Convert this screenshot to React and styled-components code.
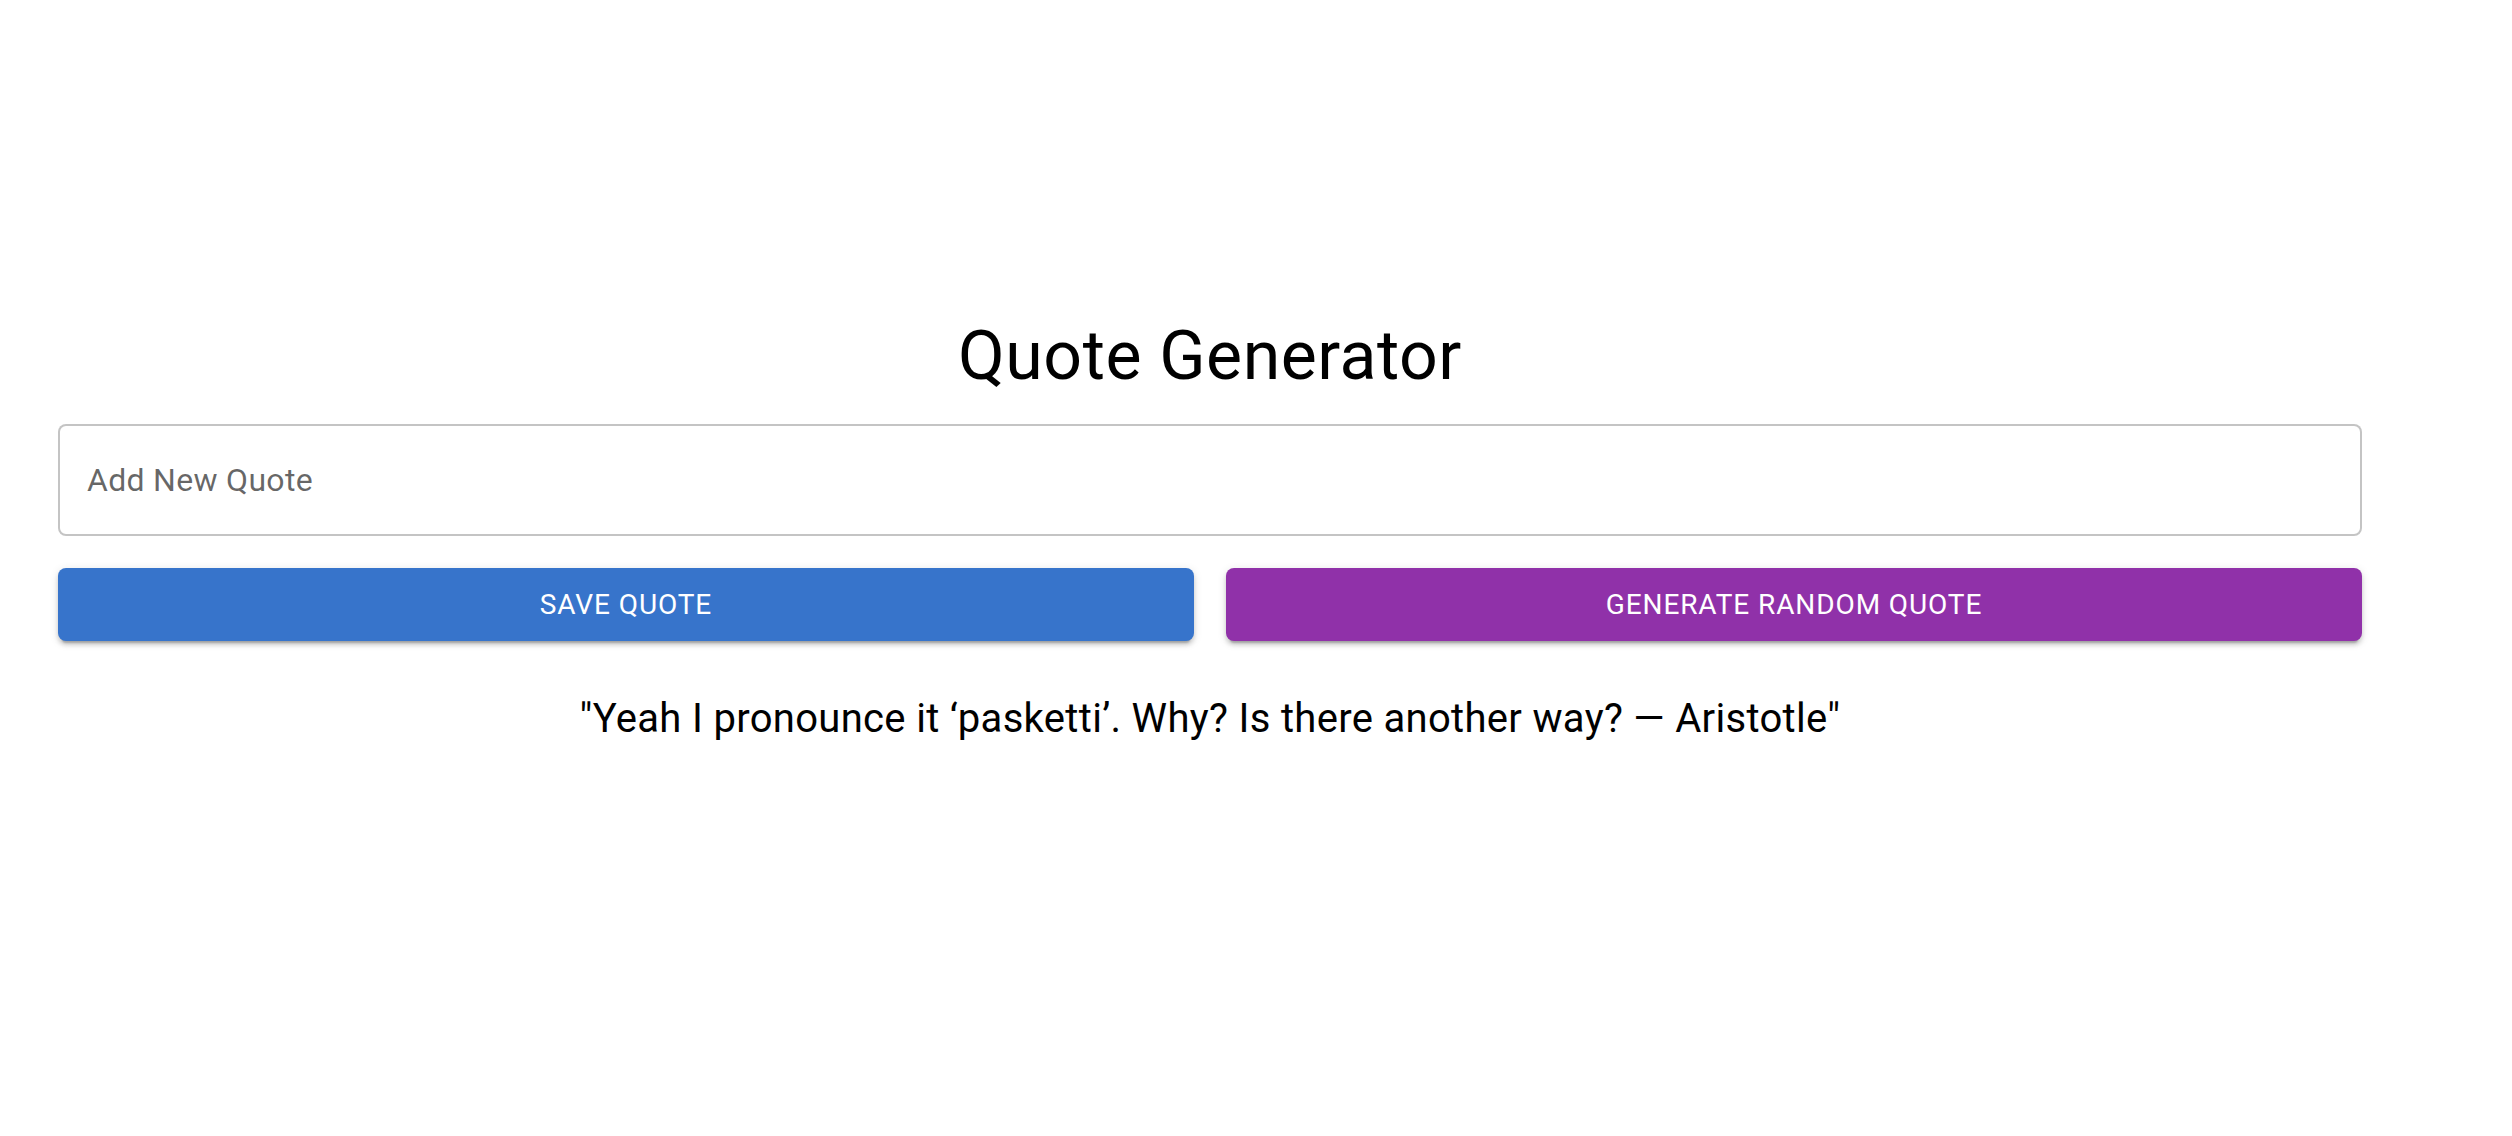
import React, { useState } from 'react';
import styled, { createGlobalStyle } from 'styled-components';

const GlobalStyle = createGlobalStyle`
  body {
    margin: 0;
    background: #fff;
    font-family: Roboto, "Helvetica Neue", Arial, sans-serif;
  }
`;

const quotes = [
  "Yeah I pronounce it \u2018pasketti\u2019. Why? Is there another way? \u2014 Aristotle",
];

const App = () => {
  const [text, setText] = useState('');
  const [list, setList] = useState(quotes);
  const [current, setCurrent] = useState(quotes[0]);

  const saveQuote = () => {
    if (!text.trim()) return;
    setList([...list, text.trim()]);
    setText('');
  };

  const randomQuote = () => {
    setCurrent(list[Math.floor(Math.random() * list.length)]);
  };

  return (
    <>
      <GlobalStyle />
      <Page>
        <Title>Quote Generator</Title>
        <QuoteInput
          placeholder="Add New Quote"
          value={text}
          onChange={(e) => setText(e.target.value)}
        />
        <ButtonRow>
          <ActionButton color="#3774cb" onClick={saveQuote}>Save Quote</ActionButton>
          <ActionButton color="#9031a9" onClick={randomQuote}>Generate Random Quote</ActionButton>
        </ButtonRow>
        <QuoteText>"{current}"</QuoteText>
      </Page>
    </>
  );
};

export default App;

const Page = styled.div`
  width: 2304px;
  padding: 314px 0 0 58px;
  display: flex;
  flex-direction: column;
`;

const Title = styled.h1`
  margin: 0 0 26px;
  font-size: 68px;
  font-weight: 400;
  line-height: 84px;
  letter-spacing: 0.5px;
  text-align: center;
  color: #000;
`;

const QuoteInput = styled.input`
  box-sizing: border-box;
  height: 112px;
  width: 100%;
  padding: 0 27px;
  border: 2px solid rgba(0, 0, 0, 0.23);
  border-radius: 8px;
  font-family: Roboto, Arial, sans-serif;
  font-size: 32px;
  letter-spacing: 0.3px;
  color: #000;
  outline: none;
  &::placeholder {
    color: rgba(0, 0, 0, 0.6);
  }
`;

const ButtonRow = styled.div`
  display: grid;
  grid-template-columns: 1fr 1fr;
  gap: 32px;
  margin-top: 32px;
`;

const ActionButton = styled.button`
  height: 73px;
  border: none;
  border-radius: 8px;
  background: ${(p) => p.color};
  color: #fff;
  font-family: Roboto, Arial, sans-serif;
  font-size: 28px;
  font-weight: 400;
  letter-spacing: 0.9px;
  text-transform: uppercase;
  cursor: pointer;
  box-shadow: 0 6px 2px -4px rgba(0, 0, 0, 0.2), 0 4px 4px 0 rgba(0, 0, 0, 0.14),
    0 2px 10px 0 rgba(0, 0, 0, 0.12);
`;

const QuoteText = styled.p`
  margin: 46px 0 0;
  font-size: 40px;
  line-height: 64px;
  font-weight: 400;
  letter-spacing: 0.32px;
  text-align: center;
  color: #000;
`;
